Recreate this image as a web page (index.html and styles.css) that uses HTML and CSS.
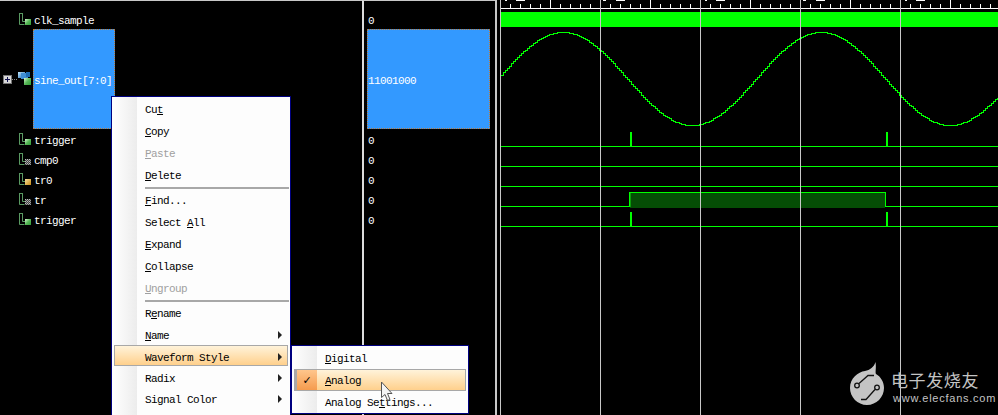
FILE: index.html
```html
<!DOCTYPE html>
<html lang="en">
<head>
<meta charset="utf-8">
<title>Waveform viewer</title>
<link rel="stylesheet" href="styles.css">
</head>
<body>
<svg class="defs" width="0" height="0" aria-hidden="true">
  <defs>
    <pattern id="dither" width="2" height="2" patternUnits="userSpaceOnUse">
      <rect width="2" height="2" fill="#444"/><rect width="1" height="1" fill="#bbb"/><rect x="1" y="1" width="1" height="1" fill="#999"/>
    </pattern>
    <linearGradient id="greenbox" x1="0" y1="0" x2="1" y2="1"><stop offset="0" stop-color="#d8f5d0"/><stop offset=".5" stop-color="#58b858"/><stop offset="1" stop-color="#2f9a35"/></linearGradient>
    <linearGradient id="amberbox" x1="0" y1="0" x2="1" y2="1"><stop offset="0" stop-color="#f8e0a0"/><stop offset="1" stop-color="#c88a10"/></linearGradient>
    <linearGradient id="busbox" x1="0" y1="0" x2="1" y2="1"><stop offset="0" stop-color="#bfe4fa"/><stop offset="1" stop-color="#1c6db8"/></linearGradient>
    <symbol id="pulse" viewBox="0 0 9 12"><path d="M.5 0V11.500H5.500M3.500 0V8.500H6.500M.5 .5H3.500" fill="none" stroke="#5a9a62"/></symbol>
  </defs>
</svg>

<main class="viewer">
  <section class="names">
    <div class="row">
      <span class="slot"></span>
      <svg class="sig" width="16" height="20" viewBox="0 0 16 20"><use href="#pulse" x="2" y="4" width="9" height="12"/><rect x="8" y="10" width="6" height="6" fill="url(#greenbox)"/></svg>
      <span class="label">clk_sample</span>
    </div>
    <div class="row tall">
      <span class="slot"><span class="plus"></span><span class="dots"></span></span>
      <svg class="sig" width="16" height="20" viewBox="0 0 16 20"><rect y="3" x="1" width="7" height="6" fill="url(#busbox)"/><rect y="4" x="4" width="7" height="6" fill="#3f8fd6"/><rect y="3" x="9" width="4" height="5" fill="#1f6fb8"/><rect x="7" y="9" width="7" height="7" fill="url(#greenbox)"/></svg>
      <span class="label selected">sine_out[7:0]</span>
    </div>
    <div class="row">
      <span class="slot"></span>
      <svg class="sig" width="16" height="20" viewBox="0 0 16 20"><use href="#pulse" x="2" y="4" width="9" height="12"/><rect x="8" y="10" width="6" height="6" fill="url(#greenbox)"/></svg>
      <span class="label">trigger</span>
    </div>
    <div class="row">
      <span class="slot"></span>
      <svg class="sig" width="16" height="20" viewBox="0 0 16 20"><use href="#pulse" x="2" y="4" width="9" height="12"/><rect x="8" y="10" width="6" height="6" fill="url(#dither)"/></svg>
      <span class="label">cmp0</span>
    </div>
    <div class="row">
      <span class="slot"></span>
      <svg class="sig" width="16" height="20" viewBox="0 0 16 20"><use href="#pulse" x="2" y="4" width="9" height="12"/><rect x="8" y="10" width="6" height="6" fill="url(#amberbox)"/></svg>
      <span class="label">tr0</span>
    </div>
    <div class="row">
      <span class="slot"></span>
      <svg class="sig" width="16" height="20" viewBox="0 0 16 20"><use href="#pulse" x="2" y="4" width="9" height="12"/><rect x="8" y="10" width="6" height="6" fill="url(#dither)"/></svg>
      <span class="label">tr</span>
    </div>
    <div class="row">
      <span class="slot"></span>
      <svg class="sig" width="16" height="20" viewBox="0 0 16 20"><use href="#pulse" x="2" y="4" width="9" height="12"/><rect x="8" y="10" width="6" height="6" fill="url(#greenbox)"/></svg>
      <span class="label">trigger</span>
    </div>
  </section>

  <section class="values">
    <div class="row"><span class="label">0</span></div>
    <div class="row tall"><span class="label selected fill">11001000</span></div>
    <div class="row"><span class="label">0</span></div>
    <div class="row"><span class="label">0</span></div>
    <div class="row"><span class="label">0</span></div>
    <div class="row"><span class="label">0</span></div>
    <div class="row"><span class="label">0</span></div>
  </section>

  <section class="waves">
    <svg class="wave-canvas" width="498" height="415" viewBox="500 0 498 415" shape-rendering="crispEdges">
      <defs>
        <pattern id="minor" x="500" y="4" width="10" height="4" patternUnits="userSpaceOnUse"><rect width="1" height="4" fill="#fff"/></pattern>
        <pattern id="major" x="550" y="0" width="100" height="8" patternUnits="userSpaceOnUse"><rect width="1" height="8" fill="#fff"/></pattern>
      </defs>
      <rect x="500" y="4" width="498" height="4" fill="url(#minor)"/>
      <rect x="500" y="0" width="498" height="8" fill="url(#major)"/>
      <rect x="501" y="8" width="497" height="1" fill="#fff"/>
      <g fill="#fff">
        <rect x="505" y="0" width="2" height="1"/><rect x="516" y="0" width="9" height="1"/>
        <rect x="603" y="0" width="3" height="1"/><rect x="616" y="0" width="9" height="1"/>
        <rect x="705" y="0" width="2" height="1"/><rect x="716" y="0" width="9" height="1"/>
        <rect x="803" y="0" width="3" height="1"/><rect x="816" y="0" width="9" height="1"/>
        <rect x="905" y="0" width="2" height="1"/><rect x="916" y="0" width="9" height="1"/>
      </g>

      <rect x="501" y="12" width="497" height="15" fill="#00ff00"/>
      <path id="sine" d="" fill="none" stroke="#00ff00"/>

      <g fill="#00ff00">
        <rect x="501" y="146" width="497" height="1"/>
        <rect x="630" y="132" width="2" height="14"/>
        <rect x="886" y="132" width="2" height="14"/>
        <rect x="501" y="166" width="497" height="1"/>
        <rect x="501" y="186" width="497" height="1"/>
        <rect x="501" y="206" width="129" height="1"/>
        <rect x="885" y="206" width="113" height="1"/>
        <rect x="501" y="226" width="497" height="1"/>
        <rect x="630" y="212" width="2" height="14"/>
        <rect x="886" y="212" width="2" height="14"/>
      </g>
      <rect x="630" y="193" width="255" height="15" fill="#054d05"/>
      <path d="M629.500 206V192.500H885.500V206" fill="none" stroke="#00ff00"/>
      <rect x="630" y="193" width="1" height="14" fill="#0a9a0a"/>

      <g fill="#c8c8c8">
        <rect x="500" y="0" width="1" height="415"/>
        <rect x="600" y="0" width="1" height="415"/>
        <rect x="700" y="0" width="1" height="415"/>
        <rect x="800" y="0" width="1" height="415"/>
        <rect x="900" y="0" width="1" height="415"/>
      </g>
    </svg>

    <div class="watermark">
      <svg class="wm-logo" width="36" height="44" viewBox="850 362 36 44">
        <path d="M875.500 362C876.500 368 875 372 876 374C881 377 884 382 884 388C884 397 876.500 405 867 405C857.500 405 850 397 850 388C850 378 858 372 865 371C870 370 874 367 875.500 362Z" fill="#c4c4c4"/>
        <g fill="none" stroke="#111" stroke-width="1.300">
          <path d="M859 383.500L868 375.500H874"/>
          <path d="M875 389.500L866 399.500H861"/>
          <circle cx="857" cy="385.500" r="2.300"/>
          <circle cx="877" cy="387.500" r="2.300"/>
        </g>
      </svg>
      <div class="wm-text">
        <span class="wm-cn">电子发烧友</span>
        <span class="wm-url">www.elecfans.com</span>
      </div>
    </div>
  </section>
</main>

<nav class="menu main-menu">
  <div class="item"><span>Cu<u>t</u></span></div>
  <div class="item"><span><u>C</u>opy</span></div>
  <div class="item off"><span><u>P</u>aste</span></div>
  <div class="item"><span><u>D</u>elete</span></div>
  <div class="sep"></div>
  <div class="item"><span><u>F</u>ind...</span></div>
  <div class="item"><span>Select <u>A</u>ll</span></div>
  <div class="item"><span><u>E</u>xpand</span></div>
  <div class="item"><span><u>C</u>ollapse</span></div>
  <div class="item off"><span><u>U</u>ngroup</span></div>
  <div class="sep"></div>
  <div class="item"><span>R<u>e</u>name</span></div>
  <div class="item more"><span><u>N</u>ame</span></div>
  <div class="item short more hot"><span>Waveform Style</span></div>
  <div class="item short more"><span>Radix</span></div>
  <div class="item short more"><span>Signal Color</span></div>
</nav>

<nav class="menu sub-menu">
  <div class="item"><span><u>D</u>igital</span></div>
  <div class="item hot checked"><span class="check">✓</span><span><u>A</u>nalog</span></div>
  <div class="item"><span>Analog Se<u>t</u>tings...</span></div>
</nav>

<svg class="pointer" width="14" height="22" viewBox="0 0 14 22">
  <path d="M1.500 1V16.500L5 13.500L7.500 19.500L10 18.500L7.500 12.500H12Z" fill="#f4f4f4" stroke="#555"/>
</svg>

<script src="wave.js"></script>
</body>
</html>
```

FILE: styles.css
```css
* { box-sizing: border-box; }

html, body {
  margin: 0;
  height: 415px;
  overflow: hidden;
  background: #000;
}

body {
  position: relative;
  font-family: "Liberation Mono", "DejaVu Sans Mono", monospace;
  font-size: 11px;
  letter-spacing: -0.6px;
  color: #fff;
}

.defs { position: absolute; }

.viewer {
  display: grid;
  grid-template-columns: 362px 135px 501px;
  height: 415px;
}

.names, .values {
  padding-top: 8px;
  border-top: 1px solid #c8c8c8;
}

.values {
  border-left: 2px solid #dcdcdc;
  border-right: 2px solid #c8c8c8;
  padding-left: 3px;
}

.row {
  display: flex;
  align-items: center;
  height: 20px;
}

.row.tall { height: 100px; }

.slot {
  display: flex;
  align-items: center;
  width: 17px;
  padding-left: 3px;
  flex: none;
}

.plus {
  position: relative;
  width: 9px;
  height: 9px;
  background: #d8d8d8;
  border: 1px solid #777;
  flex: none;
}

.plus::before, .plus::after {
  content: "";
  position: absolute;
  background: #101050;
}

.plus::before { left: 1px; top: 3px; width: 5px; height: 1px; }
.plus::after { left: 3px; top: 1px; width: 1px; height: 5px; }

.dots {
  width: 5px;
  border-top: 1px dotted #888;
}

.sig { flex: none; display: block; }

.label {
  display: flex;
  align-items: center;
  height: 100%;
  padding: 3px 0 0 1px;
  white-space: nowrap;
}

.label.selected {
  width: 82px;
  background: #3399ff;
  border: 1px dotted #b87a3c;
  padding-left: 0;
}

.label.fill { width: 123px; }

.waves { position: relative; padding-left: 3px; }

.wave-canvas { display: block; }

.watermark {
  position: absolute;
  left: 353px;
  top: 362px;
  display: flex;
  gap: 5px;
  color: #c4c4c4;
  letter-spacing: 0;
}

.wm-logo { display: block; flex: none; }

.wm-text {
  display: flex;
  flex-direction: column;
  padding-top: 8px;
}

.wm-cn {
  font-family: "Noto Sans CJK SC", sans-serif;
  font-size: 17px;
  line-height: 20px;
  letter-spacing: 0.6px;
}

.wm-url {
  font-family: "Liberation Sans", sans-serif;
  font-size: 11px;
  line-height: 12px;
  margin-top: 2px;
  margin-left: 2px;
  letter-spacing: 0.75px;
}

.menu {
  position: absolute;
  display: flex;
  flex-direction: column;
  padding: 1px;
  border: 1px solid #000080;
  color: #000;
  background: linear-gradient(90deg, #fff, #ececec 25px, #fdfdfd 25px);
}

.main-menu { left: 111px; top: 96px; width: 180px; height: 330px; }

.sub-menu { left: 291px; top: 345px; width: 178px; height: 69px; }

.item {
  position: relative;
  display: flex;
  align-items: center;
  flex: none;
  height: 22px;
  padding: 2px 0 0 32px;
}

.item.short { height: 21px; }

.item.off { color: #a0a0a0; }

.item > span { position: relative; }

.sep {
  flex: none;
  height: 2px;
  margin: 1px 0 0 32px;
  background: #a8a8a8;
}

u { text-underline-offset: 1px; }

.item.more::after {
  content: "";
  position: absolute;
  left: 165px;
  top: 50%;
  margin-top: -4px;
  border-left: 4px solid #222;
  border-top: 4px solid transparent;
  border-bottom: 4px solid transparent;
}

.item.hot::before {
  content: "";
  position: absolute;
  left: 1px;
  right: 1px;
  top: -1px;
  bottom: 1px;
  border: 1px solid #a8a8a8;
  background: linear-gradient(#fff3da, #ffd08c);
}

.sub-menu .item.hot::before {
  top: 0;
  bottom: 0;
  border-left-width: 22px;
}

.check {
  position: absolute !important;
  left: 4px;
  width: 20px;
  height: 20px;
  top: 1px;
  display: flex;
  align-items: center;
  justify-content: center;
  background: linear-gradient(#ffc68c, #f59b4e);
  font-family: "DejaVu Sans", sans-serif;
  font-size: 11px;
  font-weight: bold;
  letter-spacing: 0;
}

.pointer {
  position: absolute;
  left: 380px;
  top: 381px;
}
```

FILE: wave.js
```js
// Staircase sine: one sample every 2 px, matching the analog trace.
var d = "";
var step = 2;
var last = null;
for (var i = 0; i * step < 498; i++) {
  var x = 501 + i * step;
  var y = Math.round(78.5 - 46.5 * Math.sin(2 * Math.PI * (x - 497.5) / 258)) + 0.5;
  if (last === null) {
    d = "M" + x + " " + y;
  } else {
    d += "H" + x;
    if (y !== last) d += "V" + y;
  }
  last = y;
}
document.getElementById("sine").setAttribute("d", d);
```
